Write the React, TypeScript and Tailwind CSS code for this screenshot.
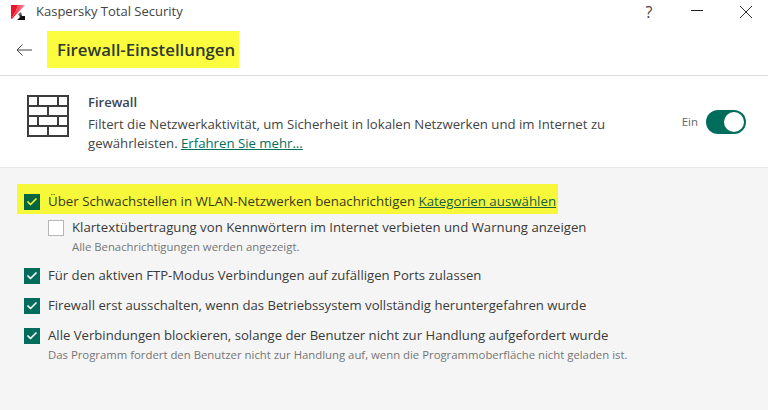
import { Check } from "lucide-react";

const font = { fontFamily: "'Open Sans', sans-serif" };

function Box({ checked = true, marked = false }: { checked?: boolean; marked?: boolean }) {
  if (!checked) {
    return <span className="block w-4 h-4 shrink-0 border border-[#b5b5b5] bg-white" />;
  }
  return (
    <span className={`flex w-4 h-4 shrink-0 items-center justify-center ${marked ? "bg-[#006640]" : "bg-[#006d5c]"}`}>
      <Check className={`w-3 h-3 ${marked ? "text-[#f8f83a]" : "text-white"}`} strokeWidth={3.5} />
    </span>
  );
}

function Row({ label, note }: { label: string; note?: string }) {
  return (
    <div className="flex items-start gap-[8px] pl-6">
      <span className="block mt-[3px]">
        <Box />
      </span>
      <div>
        <p className="text-[13.15px] leading-[21px] text-[#3a3a3a]">{label}</p>
        {note && <p className="mt-[1px] text-[11.35px] leading-[16px] text-[#757575]">{note}</p>}
      </div>
    </div>
  );
}

export default function App() {
  return (
    <div style={font} className="w-[768px] h-[410px] bg-[#f5f5f5] flex flex-col overflow-hidden">
      <header className="h-[76px] shrink-0 bg-white border-b border-[#dedede] flex flex-col">
        <div className="h-[24px] flex items-center pl-[11px]">
          <svg width="14" height="15" viewBox="0 0 14 15" className="mr-[11px]">
            <defs>
              <linearGradient id="kl" x1="0" y1="0" x2="1" y2="0">
                <stop offset="0" stopColor="#f5102a" />
                <stop offset="1" stopColor="#fb8a95" />
              </linearGradient>
              <linearGradient id="kd" x1="0" y1="0" x2="1" y2="1">
                <stop offset="0" stopColor="#bbb" />
                <stop offset="0.6" stopColor="#111" />
              </linearGradient>
            </defs>
            <polygon points="0,0 7,0 5,6 0,14" fill="#f0142a" />
            <polygon points="7,0 14,0 1,14 0,14 5,6" fill="url(#kl)" />
            <polygon points="7,9 10,7 11,11 14,11 14,15 6,15 9,12" fill="url(#kd)" />
          </svg>
          <span className="text-[13px] text-[#444]">Kaspersky Total Security</span>
          <div className="ml-auto flex items-center">
            <span className="w-[14px] text-center text-[16px] leading-[16px] text-[#444]">?</span>
            <svg width="14" height="14" viewBox="0 0 14 14" className="ml-[34px]" stroke="#222" strokeWidth="1">
              <path d="M1 5.5h12" />
            </svg>
            <svg width="14" height="14" viewBox="0 0 14 14" className="ml-[35px] mr-[15px]" stroke="#333" strokeWidth="1" fill="none">
              <path d="M1 1l12 12M13 1L1 13" />
            </svg>
          </div>
        </div>
        <div className="flex items-center mt-[7px]">
          <svg width="16" height="12" viewBox="0 0 16 12" className="ml-[16px]" fill="none" stroke="#444" strokeWidth="1">
            <path d="M16 6H1M6.5 .5L1 6l5.5 5.5" />
          </svg>
          <h1 className="ml-[15px] h-[37px] w-[192px] bg-[#fdfd40] pl-[10px] text-[16.8px] leading-[37px] font-semibold text-[#2f3a2a] whitespace-nowrap">
            Firewall-Einstellungen
          </h1>
        </div>
      </header>

      <section className="h-[92px] shrink-0 bg-white border-b border-[#e8e8e8] flex pl-[27px] pr-[22px]">
        <svg width="42" height="42" viewBox="0 0 42 42" className="mt-[19px] shrink-0" fill="none" stroke="#3c3c3c" strokeWidth="2">
          <rect x="1" y="1" width="40" height="40" />
          <path d="M1 11h40M1 21h40M1 31h40M11 1v10M31 1v10M21 11v10M11 21v10M31 21v10M21 31v10" />
        </svg>
        <div className="ml-[19px] mt-[14px] w-[560px]">
          <p className="text-[13px] leading-[25px] font-semibold text-[#3a4450]">Firewall</p>
          <p className="text-[13.2px] leading-[19px] text-[#444]">
            Filtert die Netzwerkaktivität, um Sicherheit in lokalen Netzwerken und im Internet zu gewährleisten.{" "}
            <span className="text-[#00705f] underline">Erfahren Sie mehr...</span>
          </p>
        </div>
        <div className="ml-auto mt-[34px] flex items-center self-start gap-[8px]">
          <span className="text-[11.5px] text-[#666]">Ein</span>
          <span className="w-10 h-6 rounded-full bg-[#006d5c] flex items-center justify-end pr-[2px]">
            <span className="w-[20px] h-[20px] rounded-full bg-white" />
          </span>
        </div>
      </section>

      <main className="pt-[16px] flex flex-col">
        <div className="ml-[17px] w-[541px] h-[30px] bg-[#f8f83a] flex items-center gap-[8px] pl-[7px] pt-[5px]">
          <Box marked />
          <p className="text-[13.3px] text-[#3a3a20] whitespace-nowrap">
            Über Schwachstellen in WLAN-Netzwerken benachrichtigen{" "}
            <span className="text-[#14604a] underline">Kategorien auswählen</span>
          </p>
        </div>
        <div className="flex items-start gap-[9px] pl-[48px] mt-[3px]">
          <span className="block mt-[3px]">
            <Box checked={false} />
          </span>
          <div className="-ml-px">
            <p className="text-[13.2px] leading-[21px] text-[#3a3a3a]">
              Klartextübertragung von Kennwörtern im Internet verbieten und Warnung anzeigen
            </p>
            <p className="mt-[1px] text-[11.35px] leading-[16px] text-[#757575]">
              Alle Benachrichtigungen werden angezeigt.
            </p>
          </div>
        </div>
        <div className="flex flex-col gap-[9px] mt-[10px]">
          <Row label="Für den aktiven FTP-Modus Verbindungen auf zufälligen Ports zulassen" />
          <Row label="Firewall erst ausschalten, wenn das Betriebssystem vollständig heruntergefahren wurde" />
          <Row
            label="Alle Verbindungen blockieren, solange der Benutzer nicht zur Handlung aufgefordert wurde"
            note="Das Programm fordert den Benutzer nicht zur Handlung auf, wenn die Programmoberfläche nicht geladen ist."
          />
        </div>
      </main>
    </div>
  );
}
